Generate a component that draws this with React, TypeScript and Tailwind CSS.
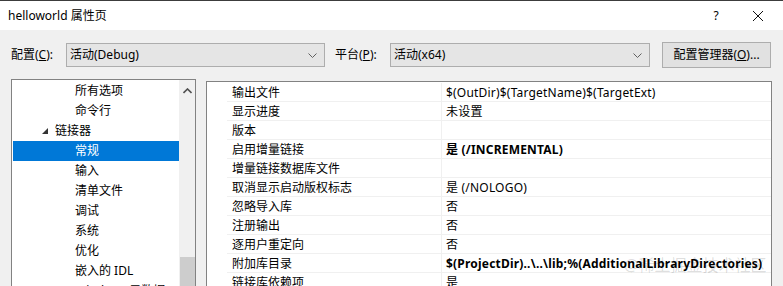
import React from "react";

const treeItems: { label: string; indent: number; expander?: boolean; selected?: boolean }[] = [
  { label: "所有选项", indent: 63 },
  { label: "命令行", indent: 63 },
  { label: "链接器", indent: 44, expander: true },
  { label: "常规", indent: 63, selected: true },
  { label: "输入", indent: 63 },
  { label: "清单文件", indent: 63 },
  { label: "调试", indent: 63 },
  { label: "系统", indent: 63 },
  { label: "优化", indent: 63 },
  { label: "嵌入的 IDL", indent: 63 },
  { label: "Windows 元数据", indent: 63 },
];

const props: { name: string; value: string; bold?: boolean }[] = [
  { name: "输出文件", value: "$(OutDir)$(TargetName)$(TargetExt)" },
  { name: "显示进度", value: "未设置" },
  { name: "版本", value: "" },
  { name: "启用增量链接", value: "是 (/INCREMENTAL)", bold: true },
  { name: "增量链接数据库文件", value: "" },
  { name: "取消显示启动版权标志", value: "是 (/NOLOGO)" },
  { name: "忽略导入库", value: "否" },
  { name: "注册输出", value: "否" },
  { name: "逐用户重定向", value: "否" },
  { name: "附加库目录", value: "$(ProjectDir)..\\..\\lib;%(AdditionalLibraryDirectories)", bold: true },
  { name: "链接库依赖项", value: "是" },
];

function Chevron() {
  return (
    <svg width="9" height="5" viewBox="0 0 9 5" className="text-[#606060]">
      <polyline points="0.5,0.5 4.5,4.5 8.5,0.5" fill="none" stroke="currentColor" strokeWidth="1" />
    </svg>
  );
}

export default function App() {
  return (
    <div className="relative w-[783px] h-[286px] overflow-hidden bg-[#f0f0f0] border-t border-[#3c3c3c] text-[12px] text-black font-['Noto_Sans','Noto_Sans_CJK_SC',sans-serif]">
      {/* title bar */}
      <div className="h-[29px] bg-white flex items-center pl-[8px]">
        <span className="flex-1">helloworld 属性页</span>
        <span className="w-[46px] text-center mr-[-4px]">?</span>
        <svg width="46" height="12" viewBox="0 0 46 12" className="mr-[2px]">
          <path d="M18 1 L28 11 M28 1 L18 11" stroke="#111" strokeWidth="1" />
        </svg>
      </div>

      {/* config row */}
      <div className="flex items-center pl-[11px] pt-[12px]">
        <span className="w-[55px]">
          配置(<span className="underline">C</span>):
        </span>
        <div className="w-[259px] h-[24px] bg-[#e5e5e5] border border-[#adadad] flex items-center pl-[3px] pr-[7px]">
          <span className="flex-1">活动(Debug)</span>
          <Chevron />
        </div>
        <span className="ml-[10px] w-[55px]">
          平台(<span className="underline">P</span>):
        </span>
        <div className="w-[260px] h-[24px] bg-[#e5e5e5] border border-[#adadad] flex items-center pl-[3px] pr-[7px]">
          <span className="flex-1">活动(x64)</span>
          <Chevron />
        </div>
        <div className="ml-[12px] w-[109px] h-[26px] bg-[#e1e1e1] border border-[#adadad] flex items-center justify-center">
          配置管理器(<span className="underline">O</span>)...
        </div>
      </div>

      {/* main */}
      <div className="flex items-start pl-[11px] pt-[11px]">
        {/* tree */}
        <div className="w-[185px] h-[220px] bg-white border border-[#828282] flex">
          <div className="flex-1 pl-[1px] pt-[1px]">
            {treeItems.map((t) => (
              <div
                key={t.label}
                className={`h-[20px] flex items-center ${t.selected ? "bg-[#0078d7] text-white" : ""}`}
              >
                {t.expander ? (
                  <>
                    <svg width="6" height="6" viewBox="0 0 6 6" className="ml-[29px] mr-[7px]">
                      <polygon points="6,0 6,6 0,6" fill="#333" />
                    </svg>
                    <span>{t.label}</span>
                  </>
                ) : (
                  <span style={{ paddingLeft: t.indent - 1 }}>{t.label}</span>
                )}
              </div>
            ))}
          </div>
          <div className="w-[16px] bg-[#f0f0f0] flex flex-col items-center">
            <svg width="9" height="6" viewBox="0 0 9 6" className="mt-[8px]">
              <polyline points="0.5,5 4.5,1 8.5,5" fill="none" stroke="#505050" strokeWidth="1.6" />
            </svg>
            <div className="mt-[163px] w-[15px] h-[40px] bg-[#cdcdcd]" />
          </div>
        </div>

        {/* property grid */}
        <div className="ml-[10px] mt-[2px] w-[566px] h-[220px] bg-white border border-[#828282] pt-[1px]">
          {props.map((p) => (
            <div key={p.name} className="h-[19px] flex">
              <div className="w-[20px]" />
              <div className="w-[215px] pl-[5px] pt-[1px] flex items-center border-b border-r border-[#f0f0f0]">
                {p.name}
              </div>
              <div className={`flex-1 pl-[4px] pt-[1px] flex items-center border-b border-[#f0f0f0] whitespace-nowrap tracking-[0.2px] ${p.bold ? "font-bold" : ""}`}>
                {p.value}
              </div>
            </div>
          ))}
        </div>
      </div>

      {/* watermark */}
      <div className="absolute left-[624px] top-[252px] text-[16px] text-[#000]/15 whitespace-nowrap">
        @稀土掘金技术社区
      </div>
    </div>
  );
}
